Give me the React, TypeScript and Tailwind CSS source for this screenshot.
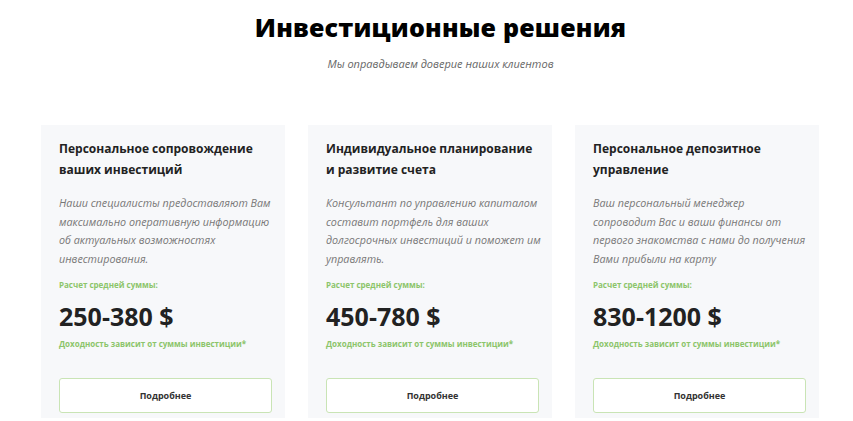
import React from "react";

const cards = [
  {
    title: ["Персональное сопровождение", "ваших инвестиций"],
    desc: [
      "Наши специалисты предоставляют Вам",
      "максимально оперативную информацию",
      "об актуальных возможностях",
      "инвестирования.",
    ],
    price: "250-380 $",
  },
  {
    title: ["Индивидуальное планирование", "и развитие счета"],
    desc: [
      "Консультант по управлению капиталом",
      "составит портфель для ваших",
      "долгосрочных инвестиций и поможет им",
      "управлять.",
    ],
    price: "450-780 $",
  },
  {
    title: ["Персональное депозитное", "управление"],
    desc: [
      "Ваш персональный менеджер",
      "сопроводит Вас и ваши финансы от",
      "первого знакомства с нами до получения",
      "Вами прибыли на карту",
    ],
    price: "830-1200 $",
  },
];

export default function App() {
  return (
    <div
      className="w-[853px] h-[421px] bg-white overflow-hidden"
      style={{ fontFamily: '"Open Sans", "Noto Sans", sans-serif' }}
    >
      <div className="pl-[28px]">
        <h1 className="pt-[8px] text-center text-[25px] leading-[38px] font-extrabold text-black tracking-[0.2px]">
          Инвестиционные решения
        </h1>
        <p className="mt-[11px] text-center text-[11px] leading-[14px] italic text-[#666]">
          Мы оправдываем доверие наших клиентов
        </p>
      </div>
      <div className="mt-[54px] flex gap-[23px] pl-[41px]">
        {cards.map((c, i) => (
          <div
            key={i}
            className="w-[244px] h-[293px] bg-[#f7f8fa] pt-[13px] pl-[18px] pr-[13px] flex flex-col"
          >
            <div className="text-[12px] leading-[21px] font-bold text-[#222]">
              {c.title.map((t, j) => (
                <div key={j} className="whitespace-nowrap">{t}</div>
              ))}
            </div>
            <div className="mt-[14px] text-[10.75px] leading-[18.7px] italic text-[#777]">
              {c.desc.map((t, j) => (
                <div key={j} className="whitespace-nowrap">{t}</div>
              ))}
            </div>
            <div className="mt-[10px] text-[8px] leading-[12px] font-bold text-[#8cc56a]">
              Расчет средней суммы:
            </div>
            <div className="mt-[10px] text-[25px] leading-[30px] font-bold text-[#222]">
              {c.price}
            </div>
            <div className="mt-[7px] text-[8px] leading-[12px] font-bold text-[#8cc56a] whitespace-nowrap">
              Доходность зависит от суммы инвестиции*
            </div>
            <button className="mt-[28px] h-[35px] w-full bg-white border border-[#c9e4b5] rounded-[3px] text-[9px] font-bold text-[#333]">
              Подробнее
            </button>
          </div>
        ))}
      </div>
    </div>
  );
}
